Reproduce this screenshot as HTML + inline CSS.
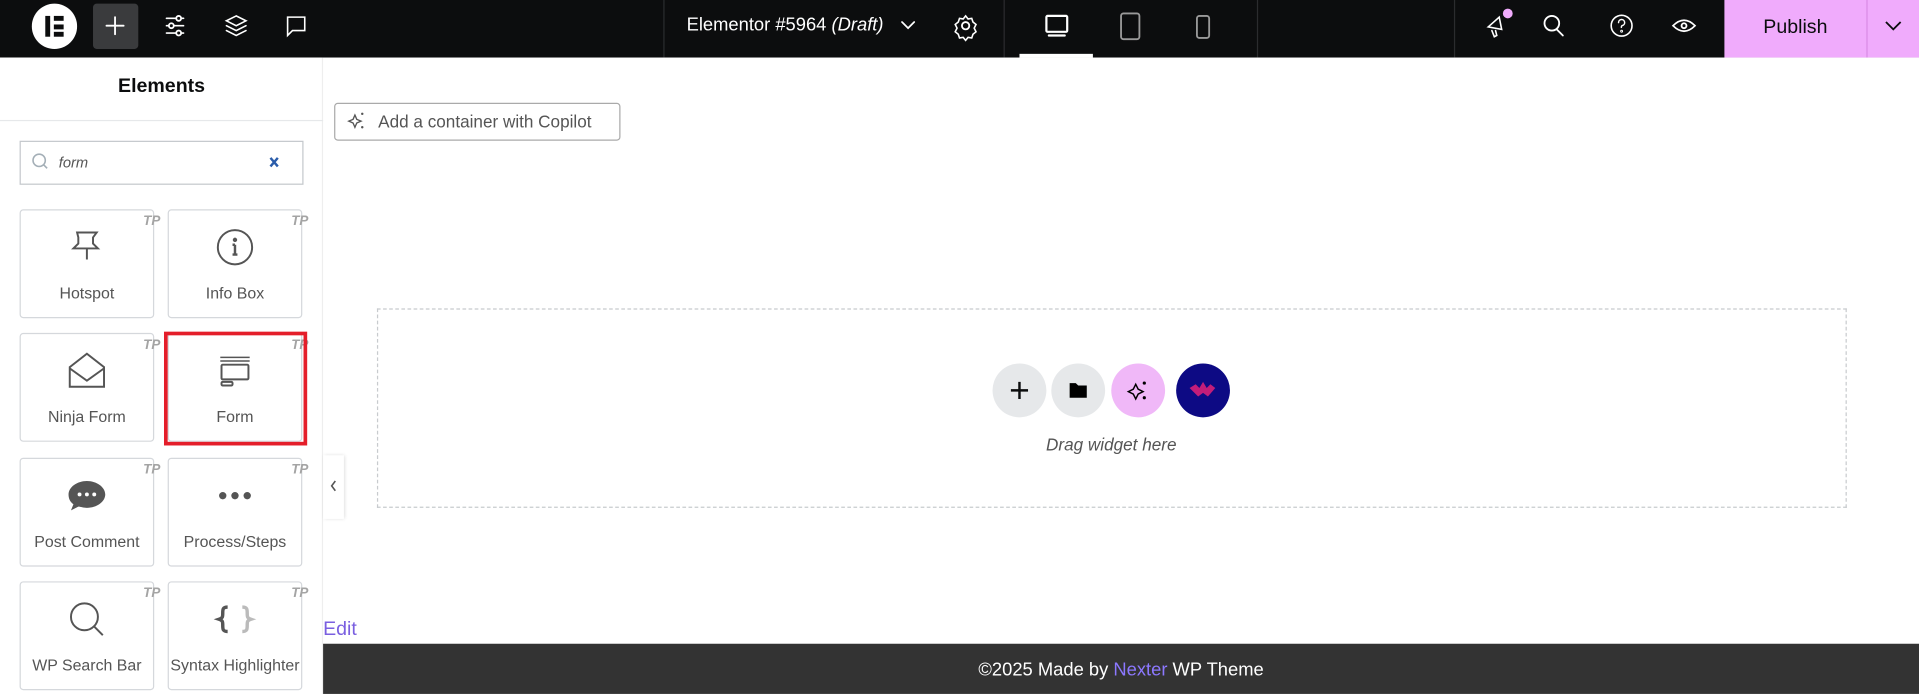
<!DOCTYPE html>
<html><head><meta charset="utf-8"><style>
*{box-sizing:border-box;margin:0;padding:0}
html,body{width:1919px;height:694px;overflow:hidden;background:#fff;font-family:"Liberation Sans",sans-serif}
#w{position:absolute;left:0;top:0;width:1568px;height:567px;transform:scale(1.22385);transform-origin:0 0}
.a{position:absolute}
.top{left:0;top:0;width:1568px;height:47px;background:#0c0d0e}
.vl{position:absolute;top:0;width:1px;height:47px;background:#2b2c2e}
svg{position:absolute;overflow:visible}
.card{position:absolute;width:110px;height:89px;border:1px solid #d5d8dc;border-radius:3px;background:#fff}
.card .lb{position:absolute;left:0;right:0;top:60px;text-align:center;font-size:13px;color:#555}
.card .tp{position:absolute;right:-6px;top:3px;font-size:11px;font-style:italic;font-weight:bold;color:#a4a4a4}
.circ{position:absolute;width:44px;height:44px;border-radius:50%;top:297px}
</style></head><body><div id="w">
<div class="a top"></div>
<div class="a" style="left:26px;top:3px;width:37px;height:37px;border-radius:50%;background:#fff"></div>
<div class="a" style="left:37px;top:13px;width:4px;height:17px;background:#0c0d0e"></div>
<div class="a" style="left:44px;top:13px;width:8px;height:4px;background:#0c0d0e"></div>
<div class="a" style="left:44px;top:19.5px;width:8px;height:4px;background:#0c0d0e"></div>
<div class="a" style="left:44px;top:26px;width:8px;height:4px;background:#0c0d0e"></div>
<div class="a" style="left:76px;top:3px;width:37px;height:37px;border-radius:3px;background:#3a3b3d"></div>
<svg style="left:0;top:0" width="1568" height="47" fill="none" stroke="#fff" stroke-width="1.5" stroke-linecap="round">
<path d="M87 21h14M94 14v14"/>
<path d="M136 15h14M136 21h14M136 27h14" stroke-width="1.3"/><circle cx="146" cy="15" r="2" fill="#0c0d0e"/><circle cx="140" cy="21" r="2" fill="#0c0d0e"/><circle cx="146" cy="27" r="2" fill="#0c0d0e"/>
<path d="M193 13l-8 4 8 4 8-4z M185 21l8 4 8-4 M185 25l8 4 8-4" stroke-width="1.3"/>
<path d="M235 14h14v11h-10l-4 4z" stroke-width="1.3"/>
<path d="M737 18l5 5 5-5" stroke-width="1.4"/>
<circle cx="789" cy="21" r="3"/><path d="M789 13l2 2.5 3-.5 1 3 2.5 2-1.5 3 1.5 3-2.5 2-1 3-3-.5-2 2.5-2-2.5-3 .5-1-3-2.5-2 1.5-3-1.5-3 2.5-2 1-3 3 .5z" stroke-width="1.3"/>
<rect x="855" y="13" width="17" height="13" rx="1" stroke-width="1.8"/><path d="M857 29h13" stroke-width="1.8"/>
<rect x="916" y="11" width="15" height="21" rx="2" stroke="#999"/>
<rect x="978" y="13" width="10" height="18" rx="2" stroke="#999"/>
<path d="M1216 22l9-8 2 10zM1219 25l2 5 2-1-1-4" stroke-width="1.3"/>
<circle cx="1268" cy="19" r="6"/><path d="M1272 24l5 5"/>
<circle cx="1325" cy="21" r="8.5" stroke-width="1.3"/><path d="M1322.5 18.5a2.5 2.5 0 1 1 3 2.4c-.6.3-.7.8-.7 1.5" stroke-width="1.2"/><circle cx="1325" cy="25.5" r=".4"/>
<path d="M1367 21q9-9 18 0q-9 9-18 0z" stroke-width="1.4"/><circle cx="1376" cy="21" r="2"/>
</svg>
<div class="a" style="left:1228px;top:7px;width:8px;height:8px;border-radius:50%;background:#f0abfc"></div>
<div class="vl" style="left:542px"></div><div class="vl" style="left:820px"></div><div class="vl" style="left:1027px"></div><div class="vl" style="left:1188px"></div>
<div class="a" style="left:561px;top:12px;color:#fff;font-size:15px;white-space:nowrap">Elementor #5964 <i>(Draft)</i></div>
<div class="a" style="left:833px;top:44px;width:60px;height:3px;background:#fff"></div>
<div class="a" style="left:1409px;top:0;width:159px;height:47px;background:#f0abfc"></div>
<div class="a" style="left:1525px;top:0;width:1px;height:47px;background:#d98ce6"></div>
<div class="a" style="left:1409px;top:14px;width:116px;text-align:center;font-size:16px;color:#0c0d0e">Publish</div>
<svg style="left:0;top:0" width="1568" height="47" fill="none" stroke="#0c0d0e" stroke-width="1.5"><path d="M1541 18l6 6 6-6"/></svg>

<div class="a" style="left:0;top:47px;width:264px;height:520px;background:#fff;border-right:1px solid #eee"></div>
<div class="a" style="left:0;top:62px;width:264px;text-align:center;font-size:16px;font-weight:bold;color:#0c0d0e">Elements</div>
<div class="a" style="left:0;top:98px;width:264px;height:1px;background:#e6e8ea"></div>
<div class="a" style="left:16px;top:115px;width:232px;height:36px;border:1px solid #c4c8cc"></div>
<svg style="left:0;top:0" width="300" height="160" fill="none" stroke="#a4afb7" stroke-width="1.3"><circle cx="32" cy="131" r="5"/><path d="M35.5 134.5l3 3"/><path d="M221 129l6 7M227 129l-6 7" stroke="#2a5caa" stroke-width="2"/></svg>
<div class="a" style="left:48px;top:126px;font-size:12px;font-style:italic;color:#555">form</div>

<div class="card" style="left:16px;top:171px"><div class="lb">Hotspot</div><div class="tp">TP</div></div>
<div class="card" style="left:137px;top:171px"><div class="lb">Info Box</div><div class="tp">TP</div></div>
<div class="card" style="left:16px;top:272px"><div class="lb">Ninja Form</div><div class="tp">TP</div></div>
<div class="card" style="left:137px;top:272px"><div class="lb">Form</div><div class="tp">TP</div></div>
<div class="card" style="left:16px;top:374px"><div class="lb">Post Comment</div><div class="tp">TP</div></div>
<div class="card" style="left:137px;top:374px"><div class="lb">Process/Steps</div><div class="tp">TP</div></div>
<div class="card" style="left:16px;top:475px"><div class="lb">WP Search Bar</div><div class="tp">TP</div></div>
<div class="card" style="left:137px;top:475px"><div class="lb">Syntax Highlighter</div><div class="tp">TP</div></div>
<div class="a" style="left:134px;top:271px;width:117px;height:93px;border:3px solid #e41e2a"></div>
<svg style="left:0;top:0" width="300" height="567" fill="none" stroke="#555" stroke-width="1.6">
<path d="M63 190h16l-3 4v5l4 4H60l4-4v-5zM71 203v9"/>
<circle cx="192" cy="202" r="14"/><path d="M192 200v8M190 200h2M190 208h4" stroke-width="2"/><circle cx="192" cy="196" r="1" fill="#555"/>
<path d="M57 300l14-11 14 11v16H57zM57 301l14 10 14-10"/>
<path d="M180 292h24M180 295h24" stroke-width="1.2"/><rect x="181" y="298" width="22" height="12" rx="1"/><rect x="181" y="312" width="9" height="3" rx="1"/>
<path d="M71 393c8 0 15 5 15 11s-7 11-15 11c-3 0-5-1-7-1l-6 3 2-5c-3-2-4-5-4-8 0-6 7-11 15-11z" fill="#555" stroke="none"/>
<circle cx="65" cy="404" r="1.6" fill="#fff" stroke="none"/><circle cx="71" cy="404" r="1.6" fill="#fff" stroke="none"/><circle cx="77" cy="404" r="1.6" fill="#fff" stroke="none"/>
<circle cx="182" cy="405" r="3" fill="#555" stroke="none"/><circle cx="192" cy="405" r="3" fill="#555" stroke="none"/><circle cx="202" cy="405" r="3" fill="#555" stroke="none"/>
<circle cx="69" cy="504" r="11"/><path d="M77 512l7 7"/>
<path d="M186 496c-4 0-4 2-4 5s0 4-3 5c3 1 3 2 3 5s0 5 4 5" stroke-width="2.8"/><path d="M198 496c4 0 4 2 4 5s0 4 3 5c-3 1-3 2-3 5s0 5-4 5" stroke="#bbb" stroke-width="2.8"/>
</svg>
<div class="a" style="left:264px;top:372px;width:17px;height:52px;background:#fff;box-shadow:1px 0 3px rgba(0,0,0,.15)"></div>
<svg style="left:0;top:0" width="300" height="430" fill="none" stroke="#555" stroke-width="1.3"><path d="M274 393l-3 4 3 4"/></svg>

<div class="a" style="left:273px;top:84px;width:234px;height:31px;border:1px solid #aaa;border-radius:3px"></div>
<svg style="left:0;top:0" width="320" height="120" fill="#555"><path d="M290 94l1.5 3.5 3.5 1.5-3.5 1.5-1.5 3.5-1.5-3.5-3.5-1.5 3.5-1.5z" fill="none" stroke="#555" stroke-width="1.1"/><circle cx="296" cy="93" r="1"/><circle cx="296" cy="104" r="1"/></svg>
<div class="a" style="left:309px;top:91px;font-size:14px;color:#555">Add a container with Copilot</div>

<div class="a" style="left:308px;top:252px;width:1201px;height:163px;border:1.5px dashed #c8cbce"></div>
<div class="circ" style="left:811px;background:#e6e8ea"></div>
<div class="circ" style="left:859px;background:#e6e8ea"></div>
<div class="circ" style="left:908px;background:#f0b8f8"></div>
<div class="circ" style="left:961px;background:#0d0a84"></div>
<svg style="left:0;top:0" width="1100" height="400">
<path d="M826 319h14M833 312v14" stroke="#0c0d0e" stroke-width="2"/>
<path d="M874 313h5l2 2h7v10h-14z" fill="#000"/>
<path d="M928 314l2 4 4 2-4 2-2 4-2-4-4-2 4-2z" fill="none" stroke="#000" stroke-width="1.2"/><circle cx="935" cy="313" r="1.3"/><circle cx="935" cy="325" r="1.3"/>
<path d="M972 317l5-3 3 3 3-5 3 5 3-3 4 3-6 7-4-3-4 3z" fill="#c21d7a"/>
</svg>
<div class="a" style="left:808px;top:355px;width:200px;text-align:center;font-size:14px;font-style:italic;color:#555">Drag widget here</div>
<div class="a" style="left:264px;top:506px;font-size:16px;color:#7a5fe0">Edit</div>
<div class="a" style="left:264px;top:526px;width:1304px;height:41px;background:#333"></div>
<div class="a" style="left:264px;top:539px;width:1304px;text-align:center;font-size:15px;color:#fff">©2025 Made by <span style="color:#8c78ff">Nexter</span> WP Theme</div>
</div></body></html>
